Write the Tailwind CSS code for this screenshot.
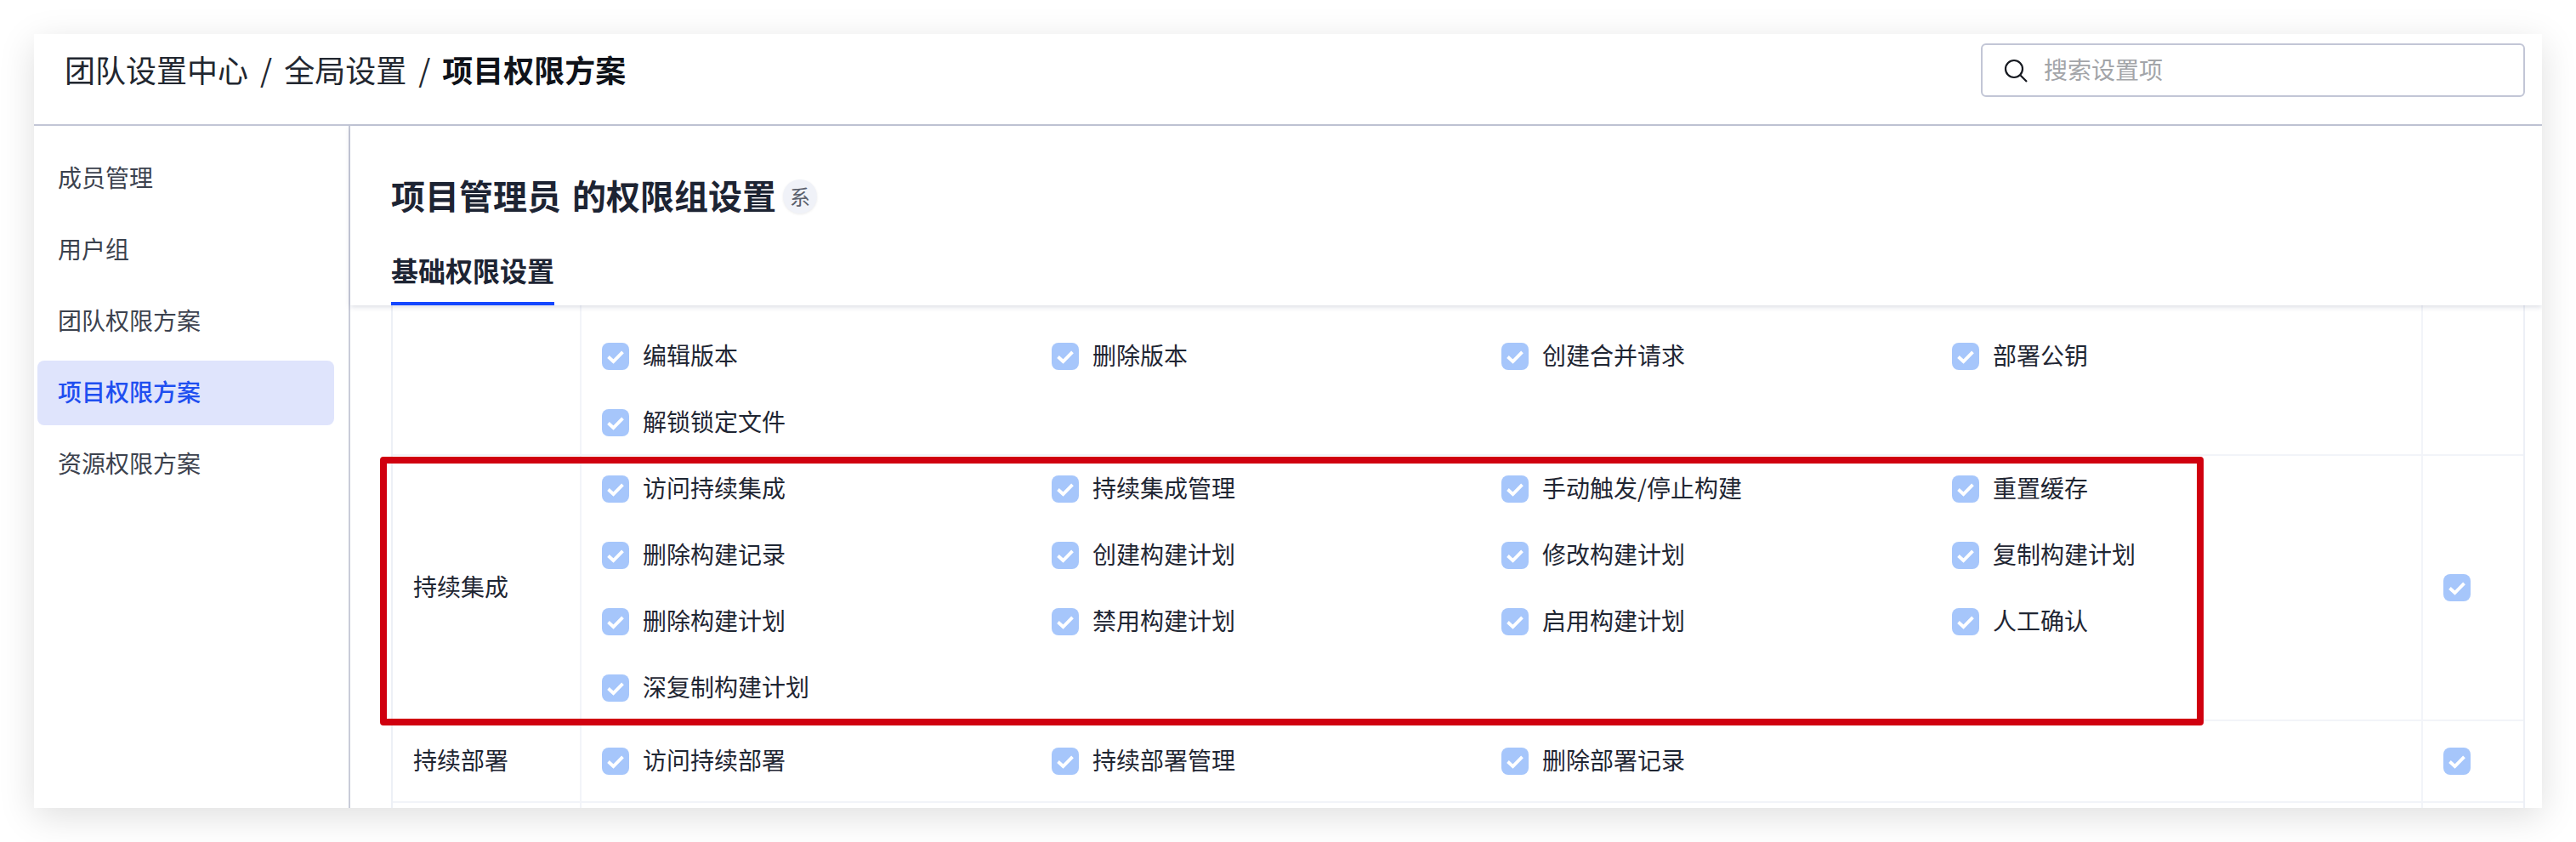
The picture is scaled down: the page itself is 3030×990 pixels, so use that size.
<!DOCTYPE html>
<html lang="zh-CN">
<head>
<meta charset="utf-8">
<script src="https://cdn.jsdelivr.net/npm/@tailwindcss/browser@4"></script>
</head>
<body class="bg-white font-['Noto_Sans_CJK_SC','Noto_Sans',sans-serif]">
<svg class="hidden"><symbol id="ck" viewBox="0 0 32 32"><path d="M7.5 16.5l6 5.5L24.5 10.8" fill="none" stroke="#fff" stroke-width="3.8"/></symbol></svg>
<div class="w-[3030px] h-[990px] pt-10 pl-10 overflow-hidden">
<div class="relative w-[2950px] h-[910px] bg-white overflow-hidden shadow-[0_10px_40px_rgba(0,0,0,0.13)] flex flex-col">
  <header class="h-[108px] shrink-0 border-b-2 border-[#c2c6d6] flex items-start justify-between pl-[36px] pr-[20px]">
    <div class="h-[82px] flex items-center text-[36px] leading-[48px] text-[#222730]">
      <span>团队设置中心</span><span class="mx-[14px]">/</span><span>全局设置</span><span class="mx-[14px]">/</span><span class="font-semibold text-[#10131a]">项目权限方案</span>
    </div>
    <div class="mt-[11px] w-[640px] h-[63px] border-2 border-[#c2c6d6] rounded-[6px] flex items-center pl-[24px] gap-[18px]">
      <svg class="w-[30px] h-[30px]" viewBox="0 0 30 30" fill="none" stroke="#15181f" stroke-width="2.2"><circle cx="13" cy="13" r="10"/><path d="M20.5 20.5L28 28"/></svg>
      <span class="-mt-1 text-[28px] leading-[36px] text-[#a3a5a9]">搜索设置项</span>
    </div>
  </header>
  <div class="flex flex-1 min-h-0">
    <nav class="w-[372px] shrink-0 border-r-2 border-[#c9ccd9] pt-6 px-[4px] flex flex-col gap-2 text-[28px] text-[#3c424e]">
      <div class="h-[76px] pl-[24px] pr-4 w-[349px] flex items-center"><span class="-mt-1">成员管理</span></div>
      <div class="h-[76px] pl-[24px] pr-4 w-[349px] flex items-center"><span class="-mt-1">用户组</span></div>
      <div class="h-[76px] pl-[24px] pr-4 w-[349px] flex items-center"><span class="-mt-1">团队权限方案</span></div>
      <div class="h-[76px] pl-[24px] pr-4 w-[349px] flex items-center bg-[#dfe4fc] rounded-lg text-[#1f4ff0] font-medium"><span class="-mt-1">项目权限方案</span></div>
      <div class="h-[76px] pl-[24px] pr-4 w-[349px] flex items-center"><span class="-mt-1">资源权限方案</span></div>
    </nav>
    <main class="flex-1 min-w-0 flex flex-col">
      <section class="h-[211px] shrink-0 pl-[48px] flex flex-col shadow-[0_2px_6px_rgba(60,70,110,0.18)] relative z-10 bg-white">
        <div class="mt-[63px] h-[40px] flex items-center gap-[8px]">
          <h1 class="-mt-1 text-[40px] leading-[48px] font-semibold text-[#1d2433] whitespace-nowrap [word-spacing:4px]">项目管理员 的权限组设置</h1>
          <span class="w-[40px] h-[40px] rounded-full bg-[#f0f2f8] shadow-[0_1px_3px_rgba(0,0,0,0.08)] flex items-center justify-center text-[24px] text-[#5a5f6b]">系</span>
        </div>
        <div class="mt-[38px] w-[192px] h-[70px] border-b-4 border-[#1447ff] text-[32px] leading-[56px] font-semibold text-[#1d2433] whitespace-nowrap">基础权限设置</div>
      </section>
      <div class="flex-1 min-h-0 ml-[48px] mr-[20px] border-x-2 border-[#edf0f6] overflow-hidden text-[28px] text-[#1f2633]">
        <!-- row 1 -->
        <div class="flex h-[177px] border-b-2 border-[#f2f4f9]">
          <div class="w-[222px] shrink-0 border-r-2 border-[#f2f4f9]"></div>
          <div class="w-[2164px] shrink-0 pt-[21px] pl-[24px] grid grid-cols-[529px_529px_530px_529px] auto-rows-[78px] items-center">
            <div class="flex items-center gap-4"><svg class="w-8 h-8 rounded-lg bg-[#a6c6fb]"><use href="#ck"/></svg><span class="-mt-1">编辑版本</span></div>
            <div class="flex items-center gap-4"><svg class="w-8 h-8 rounded-lg bg-[#a6c6fb]"><use href="#ck"/></svg><span class="-mt-1">删除版本</span></div>
            <div class="flex items-center gap-4"><svg class="w-8 h-8 rounded-lg bg-[#a6c6fb]"><use href="#ck"/></svg><span class="-mt-1">创建合并请求</span></div>
            <div class="flex items-center gap-4"><svg class="w-8 h-8 rounded-lg bg-[#a6c6fb]"><use href="#ck"/></svg><span class="-mt-1">部署公钥</span></div>
            <div class="flex items-center gap-4"><svg class="w-8 h-8 rounded-lg bg-[#a6c6fb]"><use href="#ck"/></svg><span class="-mt-1">解锁锁定文件</span></div>
          </div>
          <div class="flex-1 border-l-2 border-[#f2f4f9]"></div>
        </div>
        <!-- row 2 -->
        <div class="flex h-[312px] border-b-2 border-[#f2f4f9]">
          <div class="w-[222px] shrink-0 border-r-2 border-[#f2f4f9] pl-[24px] flex items-center"><span class="-mt-1">持续集成</span></div>
          <div class="w-[2164px] shrink-0 pl-[24px] grid grid-cols-[529px_529px_530px_529px] auto-rows-[78px] items-center">
            <div class="flex items-center gap-4"><svg class="w-8 h-8 rounded-lg bg-[#a6c6fb]"><use href="#ck"/></svg><span class="-mt-1">访问持续集成</span></div>
            <div class="flex items-center gap-4"><svg class="w-8 h-8 rounded-lg bg-[#a6c6fb]"><use href="#ck"/></svg><span class="-mt-1">持续集成管理</span></div>
            <div class="flex items-center gap-4"><svg class="w-8 h-8 rounded-lg bg-[#a6c6fb]"><use href="#ck"/></svg><span class="-mt-1">手动触发/停止构建</span></div>
            <div class="flex items-center gap-4"><svg class="w-8 h-8 rounded-lg bg-[#a6c6fb]"><use href="#ck"/></svg><span class="-mt-1">重置缓存</span></div>
            <div class="flex items-center gap-4"><svg class="w-8 h-8 rounded-lg bg-[#a6c6fb]"><use href="#ck"/></svg><span class="-mt-1">删除构建记录</span></div>
            <div class="flex items-center gap-4"><svg class="w-8 h-8 rounded-lg bg-[#a6c6fb]"><use href="#ck"/></svg><span class="-mt-1">创建构建计划</span></div>
            <div class="flex items-center gap-4"><svg class="w-8 h-8 rounded-lg bg-[#a6c6fb]"><use href="#ck"/></svg><span class="-mt-1">修改构建计划</span></div>
            <div class="flex items-center gap-4"><svg class="w-8 h-8 rounded-lg bg-[#a6c6fb]"><use href="#ck"/></svg><span class="-mt-1">复制构建计划</span></div>
            <div class="flex items-center gap-4"><svg class="w-8 h-8 rounded-lg bg-[#a6c6fb]"><use href="#ck"/></svg><span class="-mt-1">删除构建计划</span></div>
            <div class="flex items-center gap-4"><svg class="w-8 h-8 rounded-lg bg-[#a6c6fb]"><use href="#ck"/></svg><span class="-mt-1">禁用构建计划</span></div>
            <div class="flex items-center gap-4"><svg class="w-8 h-8 rounded-lg bg-[#a6c6fb]"><use href="#ck"/></svg><span class="-mt-1">启用构建计划</span></div>
            <div class="flex items-center gap-4"><svg class="w-8 h-8 rounded-lg bg-[#a6c6fb]"><use href="#ck"/></svg><span class="-mt-1">人工确认</span></div>
            <div class="flex items-center gap-4"><svg class="w-8 h-8 rounded-lg bg-[#a6c6fb]"><use href="#ck"/></svg><span class="-mt-1">深复制构建计划</span></div>
          </div>
          <div class="flex-1 border-l-2 border-[#f2f4f9] pl-[24px] flex items-center"><svg class="w-8 h-8 rounded-lg bg-[#a6c6fb]"><use href="#ck"/></svg></div>
        </div>
        <!-- row 3 -->
        <div class="flex h-[96px] border-b-2 border-[#f2f4f9]">
          <div class="w-[222px] shrink-0 border-r-2 border-[#f2f4f9] pl-[24px] flex items-center"><span class="-mt-1">持续部署</span></div>
          <div class="w-[2164px] shrink-0 pl-[24px] grid grid-cols-[529px_529px_530px_529px] auto-rows-[94px] items-center">
            <div class="flex items-center gap-4"><svg class="w-8 h-8 rounded-lg bg-[#a6c6fb]"><use href="#ck"/></svg><span class="-mt-1">访问持续部署</span></div>
            <div class="flex items-center gap-4"><svg class="w-8 h-8 rounded-lg bg-[#a6c6fb]"><use href="#ck"/></svg><span class="-mt-1">持续部署管理</span></div>
            <div class="flex items-center gap-4"><svg class="w-8 h-8 rounded-lg bg-[#a6c6fb]"><use href="#ck"/></svg><span class="-mt-1">删除部署记录</span></div>
          </div>
          <div class="flex-1 border-l-2 border-[#f2f4f9] pl-[24px] flex items-center"><svg class="w-8 h-8 rounded-lg bg-[#a6c6fb]"><use href="#ck"/></svg></div>
        </div>
        <div class="flex h-10">
          <div class="w-[222px] shrink-0 border-r-2 border-[#f2f4f9]"></div>
          <div class="w-[2164px] shrink-0"></div>
          <div class="flex-1 border-l-2 border-[#f2f4f9]"></div>
        </div>
      </div>
    </main>
  </div>
  <div class="absolute left-[407px] top-[497px] w-[2145px] h-[316px] border-[8px] border-[#d0000f] rounded-[4px] z-20"></div>
</div>
</div>
</body>
</html>
